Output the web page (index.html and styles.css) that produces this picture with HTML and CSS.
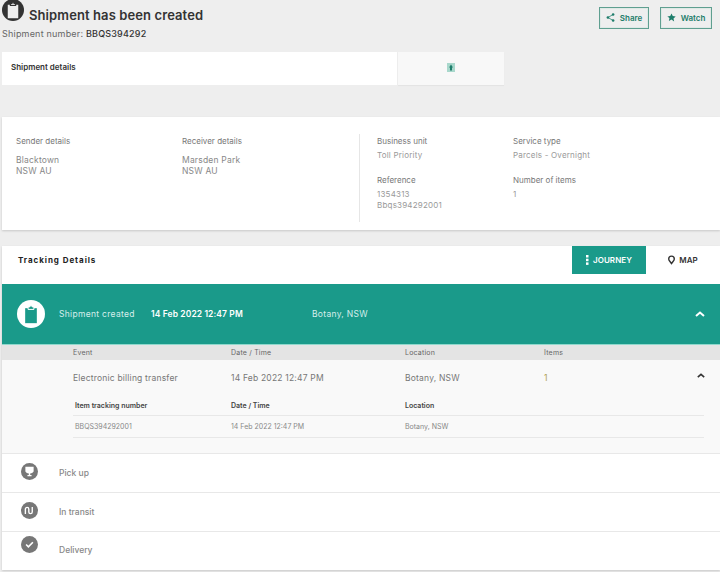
FILE: index.html
```html
<!DOCTYPE html>
<html lang="en">

<head>
    <meta charset="UTF-8">
    <title>Shipment has been created</title>
    <link rel="stylesheet" href="styles.css">
</head>

<body>
    <header class="page-head">
        <div class="head-left">
            <div class="head-title">
                <span class="head-icon">
                    <svg viewBox="0 0 24 24" width="18" height="18">
                        <path fill="#eee" d="M5 5h14v18H5z" />
                        <path fill="#eee" stroke="#333" stroke-width="1.5" d="M8.5 6V3.500h2a1.500 1.500 0 0 1 3 0h2V6z" />
                    </svg>
                </span>
                <h1>Shipment has been created</h1>
            </div>
            <div class="ship-number">Shipment number: <strong>BBQS394292</strong></div>
        </div>
        <div class="head-actions">
            <a class="outline-button">
                <svg viewBox="0 0 12 12" width="9" height="9">
                    <path fill="none" stroke="#1e7d6b" stroke-width="1" d="M9.500 2 2.500 6l7 4" />
                    <circle cx="2.500" cy="6" r="1.700" fill="#1e7d6b" />
                    <circle cx="9.500" cy="2" r="1.700" fill="#1e7d6b" />
                    <circle cx="9.500" cy="10" r="1.700" fill="#1e7d6b" />
                </svg>
                Share
            </a>
            <a class="outline-button watch">
                <svg viewBox="0 0 12 12" width="9" height="9">
                    <path fill="#1e7d6b" d="m6 .5 1.700 3.600 3.900.5-2.900 2.700.8 3.900L6 8.800l-3.500 1.900.8-3.900L.4 4.600l3.900-.5z" />
                </svg>
                Watch
            </a>
        </div>
    </header>

    <div class="tabs">
        <div class="tab tab-active">Shipment details</div>
        <div class="tab tab-other">
            <svg viewBox="0 0 8 9" width="8" height="9">
                <rect width="8" height="9" fill="#a9d8cc" />
                <path fill="#1e7d6b" d="M4 1.500 6 4.500H5V7.500H3V4.500H2z" />
            </svg>
        </div>
    </div>

    <section class="card details">
        <div class="details-left">
            <div class="detail-block">
                <div class="label">Sender details</div>
                <div class="value-lg">Blacktown<br>NSW AU</div>
            </div>
            <div class="detail-block">
                <div class="label">Receiver details</div>
                <div class="value-lg">Marsden Park<br>NSW AU</div>
            </div>
        </div>
        <div class="details-right">
            <div>
                <div class="label">Business unit</div>
                <div class="value">Toll Priority</div>
            </div>
            <div>
                <div class="label">Service type</div>
                <div class="value">Parcels - Overnight</div>
            </div>
            <div>
                <div class="label">Reference</div>
                <div class="value">1354313<br>Bbqs394292001</div>
            </div>
            <div>
                <div class="label">Number of items</div>
                <div class="value">1</div>
            </div>
        </div>
    </section>

    <section class="card tracking">
        <div class="tracking-head">
            <h2>Tracking Details</h2>
            <div class="view-switch">
                <a class="view-button view-active">
                    <svg viewBox="0 0 3 10" width="3" height="10">
                        <rect width="2.500" height="2.500" fill="#fff" />
                        <rect y="3.700" width="2.500" height="2.500" fill="#fff" />
                        <rect y="7.400" width="2.500" height="2.500" fill="#fff" />
                    </svg>
                    JOURNEY
                </a>
                <a class="view-button">
                    <svg viewBox="0 0 10 12" width="7" height="10">
                        <path fill="none" stroke="#333" stroke-width="2" d="M5 11C3 8 1 6.500 1 4.500a4 4 0 0 1 8 0C9 6.500 7 8 5 11z" />
                    </svg>
                    MAP
                </a>
            </div>
        </div>

        <div class="stage-open">
            <span class="stage-open-icon">
                <svg viewBox="0 0 24 24" width="20" height="20">
                    <path fill="#1a9a8a" d="M5 5h14v18H5z" />
                    <path fill="#1a9a8a" stroke="#fff" stroke-width="1.200" d="M8.500 6.500V3.500h2a1.500 1.500 0 0 1 3 0h2v3z" />
                </svg>
            </span>
            <span class="stage-name">Shipment created</span>
            <strong class="stage-date">14 Feb 2022 12:47 PM</strong>
            <span class="stage-place">Botany, NSW</span>
            <svg class="chevron" viewBox="0 0 10 6" width="10" height="6">
                <path fill="none" stroke="#fff" stroke-width="2" d="M1 5 5 1.500 9 5" />
            </svg>
        </div>

        <div class="event-head event-grid">
            <span>Event</span>
            <span>Date / Time</span>
            <span>Location</span>
            <span>Items</span>
        </div>

        <div class="event-body">
            <div class="event-row event-grid">
                <span>Electronic billing transfer</span>
                <span>14 Feb 2022 12:47 PM</span>
                <span>Botany, NSW</span>
                <span class="event-count">1</span>
                <svg class="chevron-dark" viewBox="0 0 10 6" width="8" height="5">
                    <path fill="none" stroke="#333" stroke-width="2" d="M1 5 5 1.500 9 5" />
                </svg>
            </div>
            <div class="item-table">
                <div class="item-row item-titles">
                    <span>Item tracking number</span>
                    <span>Date / Time</span>
                    <span>Location</span>
                </div>
                <div class="item-row item-values">
                    <span>BBQS394292001</span>
                    <span>14 Feb 2022 12:47 PM</span>
                    <span>Botany, NSW</span>
                </div>
            </div>
        </div>

        <div class="stage">
            <span class="stage-icon">
                <svg viewBox="0 0 16 16" width="11" height="11">
                    <path fill="#fff" d="M2 1h12v7a6 6 0 0 1-5 3v2h2v2H5v-2h2v-2a6 6 0 0 1-5-3z" />
                </svg>
            </span>
            <span>Pick up</span>
        </div>
        <div class="stage">
            <span class="stage-icon">
                <svg viewBox="0 0 16 16" width="11" height="11">
                    <path fill="none" stroke="#fff" stroke-width="2" d="M2 13V6a2.500 2.500 0 0 1 5 0v4a2.500 2.500 0 0 0 5 0V3" />
                </svg>
            </span>
            <span>In transit</span>
        </div>
        <div class="stage stage-last">
            <span class="stage-icon">
                <svg viewBox="0 0 16 16" width="9" height="9">
                    <path fill="none" stroke="#fff" stroke-width="3" d="m2 8 4 4 8-8" />
                </svg>
            </span>
            <span class="stage-last-name">Delivery</span>
        </div>
    </section>
</body>

</html>
```

FILE: styles.css
```css
body {
    margin: 0;
    height: 572px;
    overflow: hidden;
    background: #eeeeee;
    font-family: Inter, "Liberation Sans", sans-serif;
    font-size: 8px;
    color: #777;
}

svg {
    display: block;
    flex-shrink: 0;
}

h1,
h2 {
    margin: 0;
}

/* page header */
.page-head {
    display: flex;
    justify-content: space-between;
    height: 52px;
    padding-left: 2px;
}

.head-title {
    display: flex;
    align-items: flex-start;
    gap: 5px;
    margin-top: -1px;
}

.head-icon {
    display: flex;
    align-items: center;
    justify-content: center;
    width: 22px;
    height: 22px;
    border-radius: 50%;
    background: #333;
}

h1 {
    margin-top: 8px;
    font-size: 13px;
    line-height: 16px;
    font-weight: 600;
    color: #333;
    letter-spacing: 0.1px;
}

.ship-number {
    margin-top: 5px;
    font-size: 9px;
    letter-spacing: 0.2px;
    color: #666;
}

.ship-number strong {
    font-weight: 500;
    color: #333;
}

.head-actions {
    display: flex;
    gap: 11px;
    padding: 7px 8px 0 0;
}

.outline-button {
    display: flex;
    align-items: center;
    justify-content: center;
    gap: 5px;
    box-sizing: border-box;
    width: 50px;
    height: 22px;
    padding-bottom: 1px;
    border: 1px solid #5f9f90;
    box-shadow: inset 0 0 0 1px #dfe9e6;
    font-size: 8px;
    font-weight: 600;
    color: #1e7d6b;
}

.outline-button.watch {
    width: 52px;
}

/* tabs */
.tabs {
    display: flex;
    height: 33px;
    padding-left: 2px;
}

.tab {
    display: flex;
    align-items: center;
    box-sizing: border-box;
    padding-bottom: 3px;
}

.tab-active {
    width: 395px;
    padding-left: 9px;
    background: #fff;
    font-size: 8px;
    font-weight: 600;
    color: #333;
}

.tab-other {
    justify-content: center;
    width: 106px;
    margin-left: 1px;
    background: #f8f8f8;
    box-shadow: 0 1px 1px #e4e4e4;
}

/* cards */
.card {
    margin-left: 2px;
    background: #fff;
    box-shadow: 0 1px 2px #c8c8c8;
}

.details {
    display: flex;
    height: 113px;
    margin-top: 32px;
    box-sizing: border-box;
    padding-top: 17px;
}

.details-left {
    display: flex;
    width: 357px;
    padding: 2px 0 0 14px;
    box-sizing: border-box;
}

.detail-block {
    width: 166px;
}

.label {
    font-size: 8px;
    line-height: 10px;
    color: #777;
}

.value-lg {
    margin-top: 9px;
    font-size: 8.5px;
    line-height: 11px;
    color: #888;
    letter-spacing: 0.2px;
}

.details-right {
    display: grid;
    grid-template-columns: 136px 1fr;
    grid-auto-rows: 39px;
    height: 88px;
    padding: 2px 0 0 17px;
    box-sizing: border-box;
    flex: 1;
    border-left: 1px solid #e6e6e6;
}

.value {
    margin-top: 4px;
    font-size: 8px;
    line-height: 11px;
    color: #999;
    letter-spacing: 0.2px;
}

/* tracking */
.tracking {
    height: 324px;
    margin-top: 16px;
}

.tracking-head {
    display: flex;
    justify-content: space-between;
    height: 38px;
}

h2 {
    padding: 9px 0 0 16px;
    font-size: 8px;
    font-weight: 700;
    color: #222;
    letter-spacing: 0.95px;
}

.view-switch {
    display: flex;
    height: 28px;
}

.view-button {
    display: flex;
    align-items: center;
    justify-content: center;
    gap: 4px;
    width: 74px;
    font-size: 8px;
    font-weight: 600;
    letter-spacing: 0.1px;
    color: #333;
}

.view-active {
    background: #1a9a8a;
    color: #fff;
}

.stage-open {
    display: flex;
    align-items: center;
    height: 61px;
    padding-left: 15px;
    box-sizing: border-box;
    background: #1a9a8a;
    border-bottom: 1px solid #8fd8cc;
    font-size: 8.5px;
    color: #d5eeea;
    letter-spacing: 0.3px;
}

.stage-open-icon {
    display: flex;
    align-items: center;
    justify-content: center;
    width: 28px;
    height: 28px;
    margin-right: 14px;
    border-radius: 50%;
    background: #fff;
}

.stage-name {
    width: 92px;
}

.stage-date {
    width: 161px;
    font-weight: 600;
    color: #fff;
    letter-spacing: 0.1px;
}

.stage-place {
    flex: 1;
}

.chevron {
    margin-right: 15px;
}

.event-grid {
    display: grid;
    grid-template-columns: 158px 174px 139px 1fr;
    padding-left: 71px;
    align-items: center;
}

.event-head {
    height: 15px;
    background: #e4e4e4;
    font-size: 7px;
    color: #666;
    letter-spacing: 0.2px;
}

.event-body {
    height: 94px;
    box-sizing: border-box;
    background: #f9f9f9;
    border-bottom: 1px solid #e8e8e8;
}

.event-row {
    position: relative;
    height: 35px;
    font-size: 8.5px;
    color: #777;
    letter-spacing: 0.2px;
}

.event-count {
    color: #b0a050;
}

.chevron-dark {
    position: absolute;
    right: 15px;
    top: 13px;
}

.item-table {
    margin: 0 16px 0 71px;
}

.item-row {
    display: grid;
    grid-template-columns: 158px 174px 1fr;
    align-items: center;
    height: 21px;
    border-bottom: 1px solid #e8e8e8;
    box-sizing: border-box;
    font-size: 7px;
}

.item-row span:first-child {
    padding-left: 2px;
}

.item-titles {
    font-weight: 600;
    color: #444;
}

.item-values {
    height: 22px;
    color: #888;
}

.stage {
    display: flex;
    align-items: center;
    gap: 21px;
    height: 39px;
    padding-left: 19px;
    border-bottom: 1px solid #e8e8e8;
    box-sizing: border-box;
    font-size: 8.5px;
    font-weight: 500;
    color: #888;
}

.stage-last {
    height: 37px;
    border-bottom: none;
}

.stage-icon {
    display: flex;
    align-items: center;
    justify-content: center;
    width: 17px;
    height: 17px;
    margin-bottom: 4px;
    border-radius: 50%;
    background: #777;
}

.stage-last .stage-icon {
    align-self: flex-start;
    margin-top: 4px;
}

.stage-last-name {
    padding-bottom: 2px;
}
```
